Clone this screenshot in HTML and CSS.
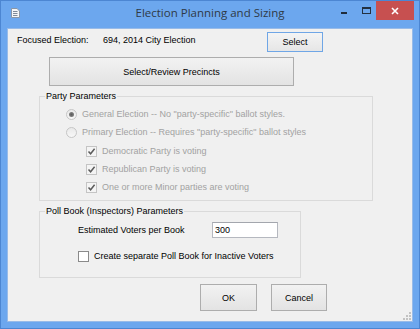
FILE: index.html
```html
<!DOCTYPE html>
<html lang="en">
<head>
    <meta charset="UTF-8">
    <title>Election Planning and Sizing</title>
    <link rel="stylesheet" href="styles.css">
</head>
<body>
    <div class="window">
        <div class="titlebar">
            <div class="title-left">
                <svg class="app-icon" width="9" height="10" viewBox="0 0 9 10">
                    <path d="M0.5 0.5 H6 L8.5 3 V9.5 H0.5 Z" fill="#f4f6f8" stroke="#8a96a6"/>
                    <path d="M2 3.5 H6.5 M2 5.5 H6.5 M2 7.5 H6.5" stroke="#7f8a99"/>
                </svg>
            </div>
            <div class="title-text">Election Planning and Sizing</div>
            <div class="title-controls">
                <div class="ctl ctl-min"><span class="min-bar"></span></div>
                <div class="ctl ctl-max"><span class="max-box"></span></div>
                <div class="ctl ctl-close">
                    <svg width="8" height="8" viewBox="0 0 8 8">
                        <path d="M1 1 L7 7 M7 1 L1 7" stroke="#fff" stroke-width="1.6"/>
                    </svg>
                </div>
            </div>
        </div>

        <div class="client">
            <div class="row-focus">
                <span class="label-focus">Focused Election:</span>
                <span class="value-focus">694, 2014 City Election</span>
                <button class="btn btn-select">Select</button>
            </div>

            <button class="btn btn-precincts">Select/Review Precincts</button>

            <!-- Party parameters (disabled) -->
            <fieldset class="group group-party">
                <legend>Party Parameters</legend>
                <div class="opt opt-radio">
                    <span class="radio checked"></span>
                    <span class="opt-text">General Election -- No "party-specific" ballot styles.</span>
                </div>
                <div class="opt opt-radio">
                    <span class="radio"></span>
                    <span class="opt-text">Primary Election -- Requires "party-specific" ballot styles</span>
                </div>
                <div class="opt opt-check first-check">
                    <span class="check disabled">
                        <svg width="9" height="9" viewBox="0 0 9 9"><path d="M1.5 4.5 L3.6 6.8 L7.6 1.8" fill="none" stroke="#5b5b5b" stroke-width="1.5"/></svg>
                    </span>
                    <span class="opt-text">Democratic Party is voting</span>
                </div>
                <div class="opt opt-check">
                    <span class="check disabled">
                        <svg width="9" height="9" viewBox="0 0 9 9"><path d="M1.5 4.5 L3.6 6.8 L7.6 1.8" fill="none" stroke="#5b5b5b" stroke-width="1.5"/></svg>
                    </span>
                    <span class="opt-text">Republican Party is voting</span>
                </div>
                <div class="opt opt-check">
                    <span class="check disabled">
                        <svg width="9" height="9" viewBox="0 0 9 9"><path d="M1.5 4.5 L3.6 6.8 L7.6 1.8" fill="none" stroke="#5b5b5b" stroke-width="1.5"/></svg>
                    </span>
                    <span class="opt-text">One or more Minor parties are voting</span>
                </div>
            </fieldset>

            <!-- Poll book parameters -->
            <fieldset class="group group-poll">
                <legend>Poll Book (Inspectors) Parameters</legend>
                <div class="row-voters">
                    <span class="label-voters">Estimated Voters per Book</span>
                    <input class="txt-voters" type="text" value="300">
                </div>
                <div class="row-inactive">
                    <span class="check"></span>
                    <span>Create separate Poll Book for Inactive Voters</span>
                </div>
            </fieldset>

            <div class="row-buttons">
                <button class="btn btn-ok">OK</button>
                <button class="btn btn-cancel">Cancel</button>
            </div>

            <svg class="grip" width="8" height="8" viewBox="0 0 8 8">
                <rect x="6" y="0" width="2" height="2" fill="#c2c2c2"/>
                <rect x="3" y="3" width="2" height="2" fill="#c2c2c2"/>
                <rect x="6" y="3" width="2" height="2" fill="#c2c2c2"/>
                <rect x="0" y="6" width="2" height="2" fill="#c2c2c2"/>
                <rect x="3" y="6" width="2" height="2" fill="#c2c2c2"/>
                <rect x="6" y="6" width="2" height="2" fill="#c2c2c2"/>
            </svg>
        </div>
    </div>
</body>
</html>
```

FILE: styles.css
```css
body {
    margin: 0;
    padding: 0;
    font-family: "Liberation Sans", Arial, sans-serif;
    font-size: 9px;
    line-height: 11px;
    color: #000;
}

.window {
    width: 420px;
    height: 329px;
    box-sizing: border-box;
    background: #6ca7ee;
    border: 1px solid #4c86d2;
    display: flex;
    flex-direction: column;
}

/* Title bar */
.titlebar {
    height: 27px;
    display: grid;
    grid-template-columns: 1fr auto 1fr;
    align-items: start;
}

.app-icon {
    display: block;
    margin: 7px 0 0 10px;
}

.title-text {
    font-family: "Open Sans", "Liberation Sans", sans-serif;
    font-size: 11.5px;
    line-height: 16px;
    padding-top: 4px;
    color: #2f3a46;
}

.title-controls {
    display: flex;
    justify-content: flex-end;
    margin-right: 5px;
}

.ctl {
    height: 19px;
    display: flex;
    justify-content: center;
}

.ctl-min {
    width: 24px;
}

.min-bar {
    width: 6px;
    height: 2px;
    background: #1f2c3b;
    margin-top: 11px;
}

.ctl-max {
    width: 20px;
}

.max-box {
    width: 7px;
    height: 4px;
    border: 1px solid #233141;
    border-top-width: 2px;
    margin-top: 6px;
}

.ctl-close {
    width: 38px;
    background: #c75050;
    align-items: center;
}

.ctl-close svg {
    display: block;
}

/* Client area */
.client {
    position: relative;
    flex: 1;
    margin: 0 6px 6px 6px;
    background: #f0f0f0;
    border: 1px solid #98bbe8;
}

.row-focus {
    display: flex;
    align-items: flex-start;
    margin-top: 3px;
    padding-left: 9px;
}

.label-focus {
    width: 86px;
    padding-top: 3px;
}

.value-focus {
    width: 164px;
    padding-top: 3px;
}

.btn {
    font-family: "Liberation Sans", Arial, sans-serif;
    font-size: 9px;
    color: #000;
    background: linear-gradient(#f2f2f2, #e3e3e3);
    border: 1px solid #adadad;
    border-radius: 0;
    padding: 0;
    box-sizing: border-box;
}

.btn-select {
    width: 56px;
    height: 20px;
    border-color: #6fa6e6;
    background: linear-gradient(#f4f4f4, #e6e6e6);
}

.btn-precincts {
    display: block;
    width: 245px;
    height: 29px;
    margin: 5px 0 0 41px;
}

/* Group boxes */
.group {
    box-sizing: border-box;
    margin: 5px 0 0 31px;
    border: 1px solid #dadada;
    padding: 0;
}

.group legend {
    padding: 0 1px;
    line-height: 11px;
}

.group-party {
    width: 334px;
    padding: 3px 0 4px 26px;
}

.group-party legend {
    margin-left: -21px;
}

.opt {
    display: flex;
    align-items: center;
    height: 18px;
}

.opt-text {
    color: #a2a2a2;
}

.radio {
    width: 11px;
    height: 11px;
    box-sizing: border-box;
    border: 1px solid #c6c6c6;
    border-radius: 50%;
    background: linear-gradient(#e9e9e9, #f7f7f7);
    margin-right: 5px;
    display: flex;
    align-items: center;
    justify-content: center;
}

.radio.checked::after {
    content: "";
    width: 5px;
    height: 5px;
    border-radius: 50%;
    background: radial-gradient(#5c5c5c, #8e8e8e);
}

.first-check {
    margin-top: 1px;
}

.opt-check {
    margin-left: 20px;
}

.check {
    width: 11px;
    height: 11px;
    box-sizing: border-box;
    border: 1px solid #8a8a8a;
    background: #fff;
    margin-right: 5px;
    display: flex;
    align-items: center;
    justify-content: center;
}

.check.disabled {
    border-color: #c4c4c4;
    background: #f4f4f4;
}

.check svg {
    display: block;
}

.group-poll {
    width: 262px;
    padding: 0 0 13px 38px;
}

.group-poll legend {
    margin-left: -33px;
}

.row-voters {
    display: flex;
    align-items: center;
    margin-top: 5px;
    height: 16px;
}

.label-voters {
    width: 134px;
}

.txt-voters {
    width: 66px;
    height: 16px;
    box-sizing: border-box;
    border: 1px solid #b5b8bf;
    border-top-color: #a3a6ad;
    background: #fff;
    font-family: "Liberation Sans", Arial, sans-serif;
    font-size: 9px;
    padding: 0 2px;
    margin: 0;
    outline: none;
}

.row-inactive {
    display: flex;
    align-items: center;
    margin-top: 10px;
    height: 16px;
}

.row-buttons {
    display: flex;
    gap: 14px;
    margin: 6px 0 0 192px;
}

.btn-ok {
    width: 57px;
    height: 27px;
}

.btn-cancel {
    width: 56px;
    height: 27px;
}

.grip {
    position: absolute;
    right: 1px;
    bottom: 1px;
}
```
